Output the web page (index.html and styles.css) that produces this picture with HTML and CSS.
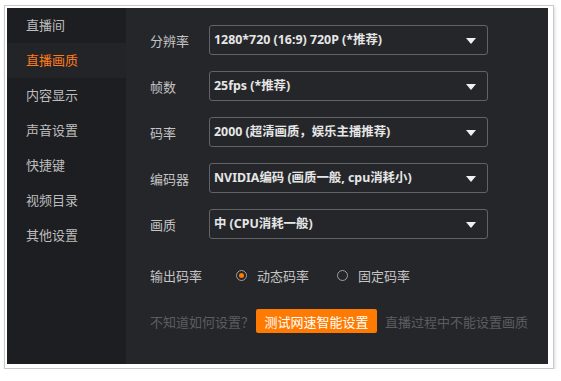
FILE: index.html
```html
<!DOCTYPE html>
<html lang="zh-CN">
<head>
  <meta charset="UTF-8" />
  <meta name="viewport" content="width=device-width, initial-scale=1.0"/>
  <title>直播画质设置</title>
  <link rel="stylesheet" href="styles.css">
</head>
<body>
  <div class="frame">
    <div class="settings-window">
      <ul class="settings-nav">
        <li>直播间</li>
        <li class="active">直播画质</li>
        <li>内容显示</li>
        <li>声音设置</li>
        <li>快捷键</li>
        <li>视频目录</li>
        <li>其他设置</li>
      </ul>

      <div class="settings-main">
        <div class="form-row">
          <span class="form-label">分辨率</span>
          <div class="select-box">1280*720 (16:9) 720P (*推荐)<span class="select-arrow"></span></div>
        </div>
        <div class="form-row">
          <span class="form-label">帧数</span>
          <div class="select-box">25fps (*推荐)<span class="select-arrow"></span></div>
        </div>
        <div class="form-row">
          <span class="form-label">码率</span>
          <div class="select-box">2000 (超清画质，娱乐主播推荐)<span class="select-arrow"></span></div>
        </div>
        <div class="form-row">
          <span class="form-label">编码器</span>
          <div class="select-box">NVIDIA编码 (画质一般, cpu消耗小)<span class="select-arrow"></span></div>
        </div>
        <div class="form-row">
          <span class="form-label">画质</span>
          <div class="select-box">中 (CPU消耗一般)<span class="select-arrow"></span></div>
        </div>

        <div class="radio-row">
          <span class="radio-label">输出码率</span>
          <label class="radio checked"><span class="radio-dot"></span>动态码率</label>
          <label class="radio"><span class="radio-dot"></span>固定码率</label>
        </div>

        <div class="help-row">
          <span class="help-text">不知道如何设置？</span>
          <button class="speed-button">测试网速智能设置</button>
          <span class="help-note">直播过程中不能设置画质</span>
        </div>
      </div>
    </div>
  </div>
</body>
</html>
```
FILE: styles.css
```css
* {
  margin: 0;
  padding: 0;
  box-sizing: border-box;
  font-family: 'Noto Sans', 'Noto Sans CJK SC', sans-serif;
}

body {
  background-color: white;
  padding: 5px 0 0 4px;
}

.frame {
  display: inline-block;
  border: 1px solid #c9c9c9;
  padding: 2px 5px 4px 2px;
  box-shadow: 1px 2px 3px rgba(0, 0, 0, 0.15);
}

.settings-window {
  display: flex;
  width: 541px;
  height: 356px;
  font-size: 13px;
}

.settings-nav {
  list-style: none;
  width: 119px;
  background-color: #1d1e21;
}

.settings-nav li {
  height: 35px;
  line-height: 35px;
  padding-left: 19px;
  color: #bdbdbd;
}

.settings-nav li.active {
  color: #ff7a1a;
  background-color: #232428;
}

.settings-main {
  flex: 1;
  background-color: #25262a;
  padding: 17px 0 0 24px;
}

.form-row {
  display: flex;
  align-items: center;
  margin-bottom: 16px;
}

.form-label {
  width: 59px;
  color: #c4c4c4;
}

.select-box {
  position: relative;
  width: 279px;
  height: 30px;
  line-height: 28px;
  padding-left: 4px;
  border: 1px solid #626366;
  border-radius: 3px;
  color: #e6e6e6;
  font-size: 12.4px;
  font-weight: 700;
}

.select-arrow {
  position: absolute;
  right: 11px;
  top: 12px;
  border-left: 5px solid transparent;
  border-right: 5px solid transparent;
  border-top: 6px solid #f0f0f0;
}

.radio-row {
  display: flex;
  align-items: center;
  height: 20px;
  margin-top: 26px;
  color: #c4c4c4;
}

.radio-label {
  width: 86px;
}

.radio {
  display: flex;
  align-items: center;
  gap: 10px;
  margin-right: 28px;
}

.radio-dot {
  width: 11px;
  height: 11px;
  border: 1px solid #a0a0a0;
  border-radius: 50%;
  display: flex;
  align-items: center;
  justify-content: center;
}

.radio.checked .radio-dot::after {
  content: '';
  width: 5px;
  height: 5px;
  border-radius: 50%;
  background-color: #ff7a00;
}

.help-row {
  display: flex;
  align-items: center;
  margin-top: 24px;
}

.help-text {
  width: 106px;
  color: #5c5d61;
}

.speed-button {
  width: 121px;
  height: 24px;
  border: none;
  border-radius: 2px;
  background-color: #ff7a00;
  color: white;
  font-size: 13px;
  cursor: pointer;
}

.help-note {
  margin-left: 8px;
  color: #5c5d61;
}
```
